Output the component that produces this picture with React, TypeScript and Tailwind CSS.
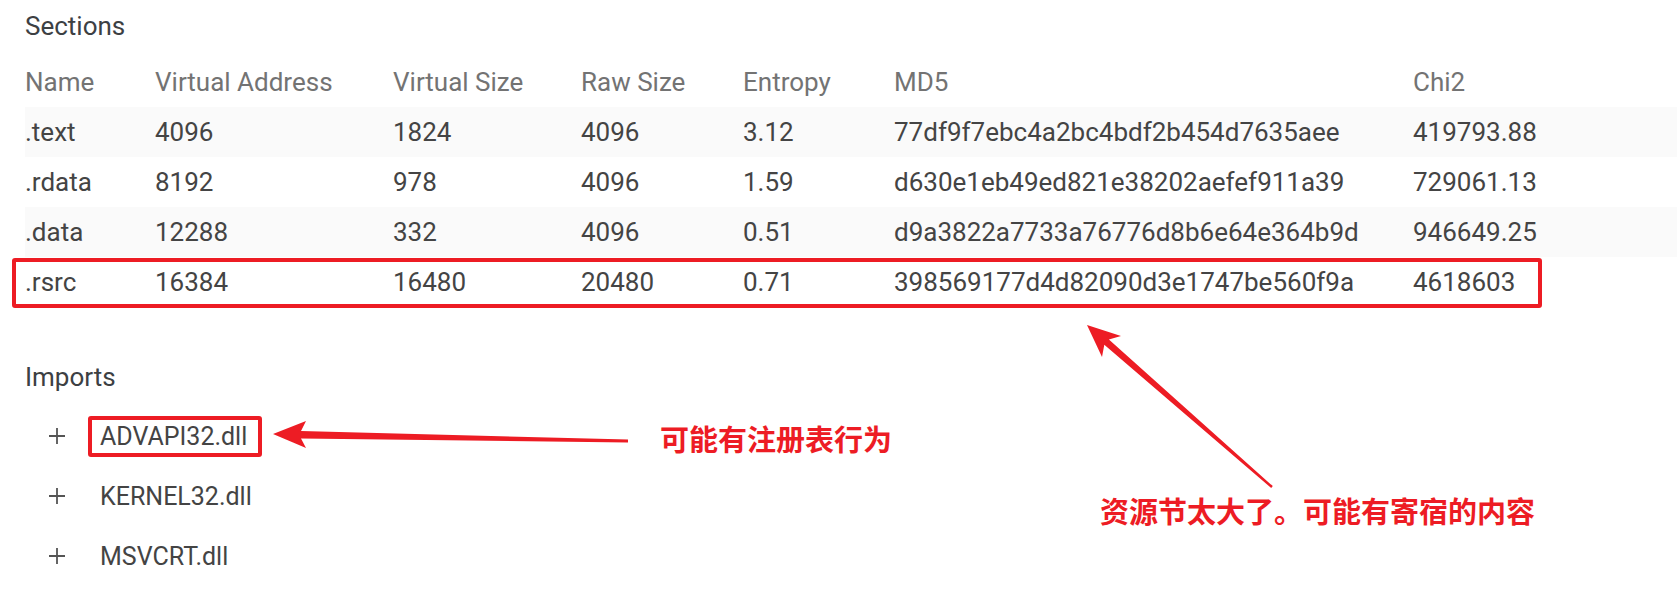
import { Fragment } from "react";

const columns = ["Name", "Virtual Address", "Virtual Size", "Raw Size", "Entropy", "MD5", "Chi2"];

const sections = [
  [".text", "4096", "1824", "4096", "3.12", "77df9f7ebc4a2bc4bdf2b454d7635aee", "419793.88"],
  [".rdata", "8192", "978", "4096", "1.59", "d630e1eb49ed821e38202aefef911a39", "729061.13"],
  [".data", "12288", "332", "4096", "0.51", "d9a3822a7733a76776d8b6e64e364b9d", "946649.25"],
  [".rsrc", "16384", "16480", "20480", "0.71", "398569177d4d82090d3e1747be560f9a", "4618603"],
];

const imports = ["ADVAPI32.dll", "KERNEL32.dll", "MSVCRT.dll"];

const gridCols = "grid grid-cols-[130px_238px_188px_162px_151px_519px_1fr]";

const PlusIcon = () => (
  <svg width="18" height="18" viewBox="0 0 18 18" className="ml-[23px] shrink-0">
    <path d="M9 1v16M1 9h16" stroke="#555" strokeWidth="1.8" />
  </svg>
);

const App = () => {
  return (
    <div className="relative w-[1677px] h-[599px] overflow-hidden bg-white font-['Roboto',sans-serif]">
      <div className="pt-[10px] pl-[25px]">
        <h2 className="text-[26px] leading-[33px] text-[#3c4043]">Sections</h2>

        <div className="mt-[14px]">
          <div className={`${gridCols} h-[50px] items-center text-[26px] text-[#737373]`}>
            {columns.map((c) => (
              <div key={c}>{c}</div>
            ))}
          </div>
          {sections.map((row, i) => (
            <div
              key={row[0]}
              className={`${gridCols} h-[50px] items-center text-[26px] text-[#444] ${
                i % 2 === 0 ? "bg-[#fafafa]" : "bg-white"
              }`}
            >
              {row.map((cell, j) => (
                <Fragment key={j}>
                  <div>{cell}</div>
                </Fragment>
              ))}
            </div>
          ))}
        </div>

        <h2 className="mt-[54px] text-[26px] leading-[33px] text-[#3c4043]">Imports</h2>

        <ul className="mt-[12px]">
          {imports.map((name, i) => (
            <li key={name} className="flex h-[60px] items-center">
              <PlusIcon />
              <span
                className={`ml-[22px] rounded-[3px] border-[4px] pl-[8px] pr-[11px] text-[25px] leading-[33px] text-[#444] ${
                  i === 0 ? "border-[#ed1c24]" : "border-transparent"
                }`}
              >
                {name}
              </span>
            </li>
          ))}
        </ul>
      </div>

      {/* annotations */}
      <div className="absolute left-[12px] top-[258px] h-[50px] w-[1530px] rounded-[3px] border-[4px] border-[#ed1c24]" />

      <svg className="pointer-events-none absolute left-0 top-0" width="1677" height="599">
        <polygon
          fill="#ed1c24"
          points="273,434 306,421 301,431 628,439.5 628,442.5 301,438.5 306,448"
        />
        <polygon
          fill="#ed1c24"
          points="1087,325 1121,336 1108.9,339.5 1272.8,486.1 1271.2,487.9 1104.3,344.7 1102,357"
        />
      </svg>

      <div className="absolute left-[660px] top-[424px] text-[29px] font-bold leading-[29px] text-[#ed1c24] font-['Noto_Sans_CJK_SC',sans-serif]">
        可能有注册表行为
      </div>
      <div className="absolute left-[1100px] top-[496px] text-[29px] font-bold leading-[29px] text-[#ed1c24] font-['Noto_Sans_CJK_SC',sans-serif]">
        资源节太大了。可能有寄宿的内容
      </div>
    </div>
  );
};

export default App;
